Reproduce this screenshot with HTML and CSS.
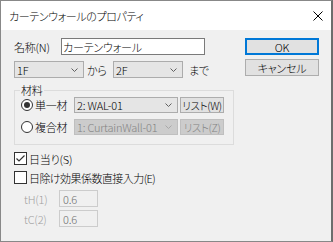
FILE: index.html
```html
<!DOCTYPE html>
<html lang="ja">
<head>
  <meta charset="UTF-8">
  <title>カーテンウォールのプロパティ</title>
  <link rel="stylesheet" href="styles.css">
</head>
<body>

  <div class="dialog">
    <div class="titlebar">
      <span class="title">カーテンウォールのプロパティ</span>
      <svg class="close" width="10" height="10" viewBox="0 0 10 10">
        <path d="M0.5 0.5 L9.5 9.5 M9.5 0.5 L0.5 9.5" stroke="#000" stroke-width="1" fill="none"/>
      </svg>
    </div>

    <div class="client">
      <div class="main">

        <div class="row">
          <span class="name-label">名称(N)</span>
          <span class="edit name-edit">カーテンウォール</span>
        </div>

        <div class="row">
          <span class="combo floor">1F<svg class="chev" width="7" height="4" viewBox="0 0 7 4"><path d="M0.5 0.5 L3.5 3.5 L6.5 0.5" /></svg></span>
          <span class="kara">から</span>
          <span class="combo floor">2F<svg class="chev" width="7" height="4" viewBox="0 0 7 4"><path d="M0.5 0.5 L3.5 3.5 L6.5 0.5" /></svg></span>
          <span class="made">まで</span>
        </div>

        <fieldset class="group">
          <legend>材料</legend>
          <div class="group-row">
            <span class="radio-label"><span class="radio checked"></span>単一材</span>
            <span class="combo material">2: WAL-01<svg class="chev" width="7" height="4" viewBox="0 0 7 4"><path d="M0.5 0.5 L3.5 3.5 L6.5 0.5" /></svg></span>
            <span class="btn small">リスト(W)</span>
          </div>
          <div class="group-row">
            <span class="radio-label"><span class="radio"></span>複合材</span>
            <span class="combo material disabled">1: CurtainWall-01<svg class="chev" width="7" height="4" viewBox="0 0 7 4"><path d="M0.5 0.5 L3.5 3.5 L6.5 0.5" /></svg></span>
            <span class="btn small disabled">リスト(Z)</span>
          </div>
        </fieldset>

        <div class="check-row first">
          <span class="checkbox"><svg width="11" height="11" viewBox="0 0 11 11"><path d="M1.5 5.5 L4 8 L9.5 2.5" /></svg></span>日当り(S)
        </div>
        <div class="check-row">
          <span class="checkbox"></span><span class="tight">日除け効果係数直接入力(E)</span>
        </div>

        <div class="coef-row first">
          <span class="coef-label">tH(1)</span>
          <span class="edit coef">0.6</span>
        </div>
        <div class="coef-row">
          <span class="coef-label">tC(2)</span>
          <span class="edit coef">0.6</span>
        </div>

      </div>

      <div class="buttons">
        <span class="btn default">OK</span>
        <span class="btn">キャンセル</span>
      </div>
    </div>
  </div>

</body>
</html>
```

FILE: styles.css
```css
* {
  box-sizing: border-box;
}

body {
  background: #fff;
  color: #000;
  font-family: "Noto Sans CJK JP", "Noto Sans", sans-serif;
  font-feature-settings: "palt";
  font-size: 11px;
  font-weight: 300;
  letter-spacing: -0.2px;
  margin: 0;
  white-space: nowrap;
}

.dialog {
  background: #f0f0f0;
  border: 1px solid #888;
  border-right: 2px solid #6d6d6d;
  display: flex;
  flex-direction: column;
  height: 242px;
  width: 333px;
}

.titlebar {
  align-items: center;
  background: #fff;
  display: flex;
  height: 29px;
  justify-content: space-between;
  padding: 0 8px 0 8px;
}

.title {
  letter-spacing: -0.4px;
}

.client {
  display: flex;
  flex: 1;
  padding: 8px 0 0 13px;
}

.main {
  display: flex;
  flex-direction: column;
  width: 220px;
}

.row {
  align-items: center;
  display: flex;
  height: 17px;
  margin-bottom: 6px;
}

.name-label {
  width: 47px;
}

.edit {
  align-items: center;
  background: #fff;
  border: 1px solid #7a7a7a;
  display: flex;
  height: 17px;
  padding-left: 1px;
}

.name-edit {
  width: 144px;
}

.combo {
  align-items: center;
  background: #e5e5e5;
  border: 1px solid #acacac;
  display: flex;
  height: 17px;
  justify-content: space-between;
  overflow: hidden;
  padding: 0 5px 0 2px;
}

.combo.floor {
  width: 70px;
}

.chev {
  fill: none;
  flex: none;
  stroke: #606060;
  stroke-width: 1;
}

.kara {
  padding-left: 3px;
  width: 29px;
}

.made {
  padding-left: 6px;
}

.group {
  border: 1px solid #dcdcdc;
  margin: 0;
  padding: 0 9px 9px 6px;
  width: 220px;
}

.group legend {
  line-height: 12px;
  margin-left: -1px;
  padding: 0 1px;
}

.group-row {
  align-items: center;
  display: flex;
  gap: 2px;
  height: 16px;
}

.group-row:first-of-type {
  margin-top: 1px;
}

.group-row + .group-row {
  margin-top: 6px;
}

.radio-label {
  align-items: center;
  display: flex;
  gap: 2px;
  width: 51px;
}

.radio {
  align-items: center;
  background: #fff;
  border: 1px solid #333;
  border-radius: 50%;
  display: flex;
  height: 12px;
  justify-content: center;
  width: 12px;
}

.radio.checked::after {
  background: #333;
  border-radius: 50%;
  content: "";
  height: 6px;
  width: 6px;
}

.combo.material {
  height: 16px;
  width: 104px;
}

.btn {
  align-items: center;
  background: #e1e1e1;
  border: 1px solid #adadad;
  display: flex;
  height: 17px;
  justify-content: center;
  width: 74px;
}

.btn.small {
  font-size: 10.5px;
  height: 16px;
  letter-spacing: -0.4px;
  width: 44px;
}

.btn.default {
  border: 2px solid #0078d7;
}

.disabled {
  background: #cccccc;
  border-color: #bfbfbf;
  color: #838383;
}

.disabled .chev {
  stroke: #a8a8a8;
}

.check-row {
  align-items: center;
  display: flex;
  gap: 2px;
  height: 13px;
  margin-top: 6px;
}

.check-row.first {
  margin-top: 7px;
}

.tight {
  letter-spacing: -0.55px;
}

.checkbox {
  align-items: center;
  background: #fff;
  border: 1px solid #333;
  display: flex;
  height: 13px;
  justify-content: center;
  width: 13px;
}

.checkbox svg {
  fill: none;
  stroke: #333;
  stroke-width: 1.2;
}

.coef-row {
  align-items: center;
  display: flex;
  height: 17px;
  margin-top: 3px;
}

.coef-row.first {
  margin-top: 6px;
}

.coef-label {
  color: #a0a0a0;
  padding-left: 10px;
  width: 45px;
}

.edit.coef {
  background: #f0f0f0;
  border-color: #cccccc;
  color: #6d6d6d;
  padding-left: 3px;
  width: 39px;
}

.buttons {
  display: flex;
  flex-direction: column;
  gap: 4px;
  margin-left: 11px;
}
```
